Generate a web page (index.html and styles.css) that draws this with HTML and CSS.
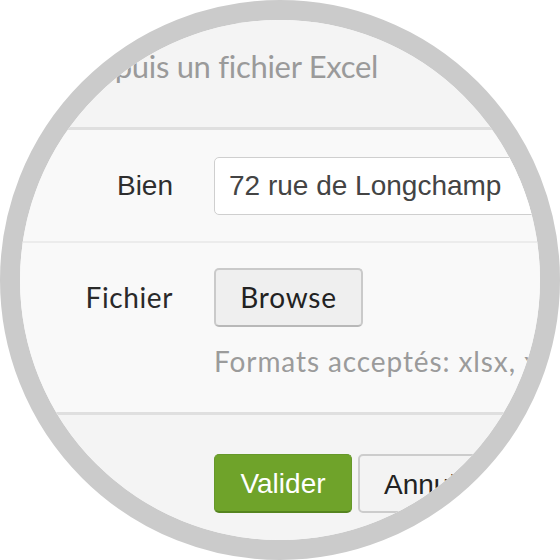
FILE: index.html
```html
<!DOCTYPE html>
<html lang="fr">
<head>
<meta charset="utf-8">
<title>Import Excel</title>
<link rel="stylesheet" href="styles.css">
</head>
<body>
<div class="lens">
  <form class="panel">
    <div class="panel-head">
      <h2 class="title">Importer depuis un fichier Excel</h2>
    </div>
    <div class="row row-first">
      <label class="label label-sans">Bien</label>
      <div class="control">
        <input class="input" type="text" value="72 rue de Longchamp">
      </div>
    </div>
    <div class="row row-last">
      <label class="label label-round">Fichier</label>
      <div class="control">
        <span class="browse">Browse</span>
        <p class="help">Formats acceptés: xlsx, xls</p>
      </div>
    </div>
    <div class="panel-foot">
      <span class="spacer"></span>
      <div class="actions">
        <button type="button" class="btn btn-success">Valider</button>
        <button type="button" class="btn btn-default">Annuler</button>
      </div>
    </div>
  </form>
</div>
</body>
</html>
```
FILE: styles.css
```css
html, body {
  margin: 0;
  padding: 0;
  background: #ffffff;
}

.lens {
  width: 560px;
  height: 560px;
  box-sizing: border-box;
  border: 20px solid #cbcbcb;
  border-radius: 50%;
  overflow: hidden;
  background: #f9f9f9;
}

.panel {
  margin: 0;
  display: flex;
  flex-direction: column;
  width: 520px;
}

.panel-head {
  display: flex;
  justify-content: flex-end;
  background: #f4f4f4;
  padding: 26px 162px 41px 0;
  border-bottom: 3px solid #dfdfdf;
}

.title {
  flex: none;
  margin: 0;
  white-space: nowrap;
  font-family: Lato, "Open Sans", sans-serif;
  font-weight: 400;
  font-size: 31px;
  letter-spacing: -0.3px;
  line-height: 40px;
  color: #9a9a9a;
}

.row {
  display: grid;
  grid-template-columns: 153px 1fr;
  column-gap: 41px;
  background: #f9f9f9;
}

.row-first {
  padding: 27px 0 26px;
  border-bottom: 2px solid #ececec;
}

.row-last {
  padding: 25px 0 31px;
  border-bottom: 3px solid #dfdfdf;
}

.label {
  text-align: right;
  font-size: 28px;
  color: #2e2e2e;
}

.label-sans {
  font-family: "Liberation Sans", Arial, sans-serif;
  line-height: 58px;
}

.label-round {
  font-family: Lato, "Open Sans", sans-serif;
  letter-spacing: 0.6px;
  line-height: 59px;
  color: #2a2a2a;
}

.control {
  min-width: 0;
  white-space: nowrap;
}

.input {
  display: block;
  box-sizing: border-box;
  width: 420px;
  height: 58px;
  margin: 0;
  padding: 0 14px;
  border: 1px solid #cfcfcf;
  border-radius: 5px;
  background: #ffffff;
  font-family: "Liberation Sans", Arial, sans-serif;
  font-size: 28px;
  color: #444444;
}

.browse {
  display: block;
  box-sizing: border-box;
  width: 149px;
  height: 59px;
  border: 2px solid #cacaca;
  border-bottom-color: #b8b8b8;
  border-radius: 5px;
  background: #efefef;
  text-align: center;
  font-family: Lato, "Open Sans", sans-serif;
  font-size: 28px;
  letter-spacing: 0.8px;
  line-height: 55px;
  color: #222222;
}

.help {
  margin: 14px 0 0;
  font-family: Lato, "Open Sans", sans-serif;
  font-size: 28px;
  letter-spacing: 0.9px;
  line-height: 40px;
  color: #9b9b9b;
}

.panel-foot {
  display: grid;
  grid-template-columns: 153px 1fr;
  column-gap: 41px;
  background: #f4f4f4;
  padding: 39px 0 40px;
}

.actions {
  display: flex;
  gap: 6px;
}

.btn {
  box-sizing: border-box;
  height: 59px;
  margin: 0;
  padding: 0 24px;
  border-radius: 5px;
  font-family: "Liberation Sans", Arial, sans-serif;
  font-size: 28px;
  line-height: 57px;
}

.btn-success {
  width: 138px;
  background: #6fa32a;
  border: 1px solid #66982a;
  border-bottom: 2px solid #55841f;
  color: #ffffff;
}

.btn-default {
  width: 150px;
  background: #f3f3f3;
  border: 2px solid #cccccc;
  color: #222222;
  text-align: left;
}
```
